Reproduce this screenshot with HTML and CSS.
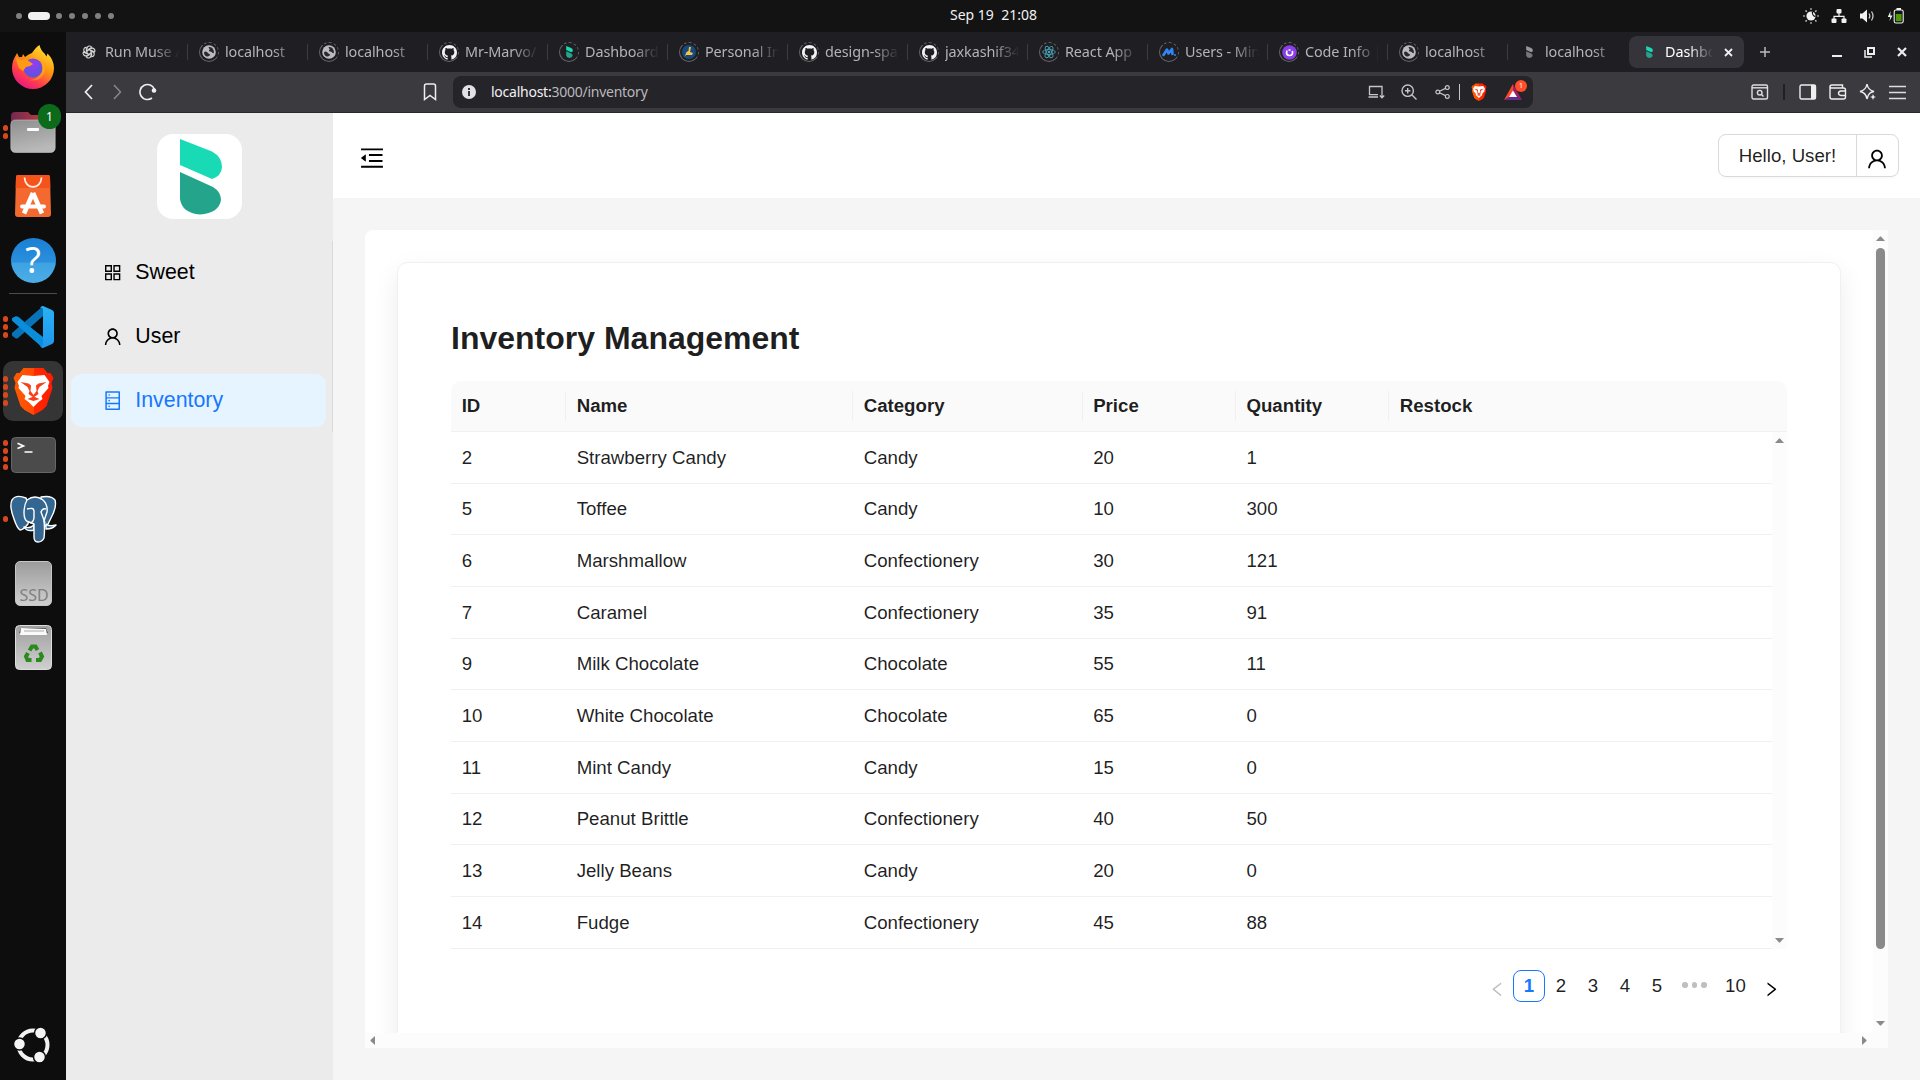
FILE: index.html
```html
<!DOCTYPE html>
<html lang="en">
<head>
<meta charset="utf-8">
<title>Dashboard</title>
<link rel="stylesheet" href="styles.css">
</head>
<body>
<svg class="defs" aria-hidden="true">
  <defs>
    <linearGradient id="ff-body" x1=".8" y1="0" x2=".2" y2="1"><stop offset="0" stop-color="#ffe83d"/><stop offset=".4" stop-color="#ff980e"/><stop offset=".72" stop-color="#ff3b4e"/><stop offset="1" stop-color="#e3118c"/></linearGradient>
    <radialGradient id="ff-globe" cx=".5" cy=".3" r=".7"><stop offset="0" stop-color="#9a3af0"/><stop offset="1" stop-color="#5457df"/></radialGradient>
    <linearGradient id="folder-back" x1="0" x2="1"><stop offset="0" stop-color="#74284f"/><stop offset="1" stop-color="#c8443c"/></linearGradient>
    <linearGradient id="grey" x1="0" y1="0" x2=".3" y2="1"><stop offset="0" stop-color="#8e8e8e"/><stop offset="1" stop-color="#b9b9b9"/></linearGradient>
    <linearGradient id="disk" x1="0" y1="0" x2="0" y2="1"><stop offset="0" stop-color="#a0a0a0"/><stop offset="1" stop-color="#cfcfcf"/></linearGradient>
    <linearGradient id="brave-g" x1="0" x2="1"><stop offset="0" stop-color="#ff5a00"/><stop offset=".5" stop-color="#ff4a05"/><stop offset=".52" stop-color="#ff2a00"/><stop offset="1" stop-color="#ff1a00"/></linearGradient>
    <linearGradient id="code-g" x1="0" y1="0" x2="0" y2="1"><stop offset="0" stop-color="#29b2f5"/><stop offset="1" stop-color="#1e97ee"/></linearGradient>
  </defs>
  <symbol id="i-user" viewBox="0 0 1024 1024"><path d="M858.5 763.6a374 374 0 00-80.6-119.5 375.63 375.63 0 00-119.5-80.6c-.4-.2-.8-.3-1.2-.5C719.5 518 760 444.7 760 362c0-137-111-248-248-248S264 225 264 362c0 82.7 40.5 156 102.8 201.1-.4.2-.8.3-1.2.5-44.8 18.9-85 46-119.5 80.6a375.63 375.63 0 00-80.6 119.5A371.7 371.7 0 00136 901.8a8 8 0 008 8.2h60c4.4 0 7.9-3.5 8-7.8 2-77.2 33-149.5 87.8-204.3 56.7-56.7 132-87.9 212.2-87.9s155.5 31.2 212.2 87.9C779 752.7 810 825 812 902.2c.1 4.4 3.6 7.8 8 7.8h60a8 8 0 008-8.2c-1-47.8-10.9-94.3-29.5-138.2zM512 534c-45.9 0-89.1-17.9-121.6-50.4S340 407.9 340 362c0-45.9 17.9-89.1 50.4-121.6S466.1 190 512 190s89.1 17.9 121.6 50.4S684 316.1 684 362c0 45.9-17.9 89.1-50.4 121.6S557.9 534 512 534z"/></symbol>
  <symbol id="i-grid" viewBox="0 0 1024 1024"><path fill-rule="evenodd" d="M144 144h336v336H144zM212 212v200h200V212zM544 144h336v336H544zM612 212v200h200V212zM144 544h336v336H144zM212 612v200h200V612zM544 544h336v336H544zM612 612v200h200V612z"/></symbol>
  <symbol id="i-db" viewBox="0 0 1024 1024"><path d="M832 64H192c-17.7 0-32 14.3-32 32v832c0 17.7 14.3 32 32 32h640c17.7 0 32-14.3 32-32V96c0-17.7-14.3-32-32-32zm-600 72h560v208H232V136zm560 480H232V408h560v208zm0 272H232V680h560v208zM304 240a40 40 0 1080 0 40 40 0 10-80 0zm0 272a40 40 0 1080 0 40 40 0 10-80 0zm0 272a40 40 0 1080 0 40 40 0 10-80 0z"/></symbol>
  <symbol id="i-fold" viewBox="0 0 1024 1024"><path d="M408 442h480c4.400 0 8-3.600 8-8v-56c0-4.400-3.600-8-8-8H408c-4.400 0-8 3.600-8 8v56c0 4.400 3.600 8 8 8zm-8 204c0 4.400 3.600 8 8 8h480c4.400 0 8-3.600 8-8v-56c0-4.400-3.600-8-8-8H408c-4.400 0-8 3.600-8 8v56zm504-486H120c-4.400 0-8 3.600-8 8v56c0 4.400 3.600 8 8 8h784c4.400 0 8-3.600 8-8v-56c0-4.400-3.600-8-8-8zm0 632H120c-4.400 0-8 3.600-8 8v56c0 4.400 3.600 8 8 8h784c4.400 0 8-3.600 8-8v-56c0-4.400-3.600-8-8-8zM115.400 518.900L271.700 642c5.800 4.600 14.400.5 14.400-6.900V388.900c0-7.400-8.500-11.500-14.400-6.900L115.400 505.100a8.740 8.740 0 000 13.800z"/></symbol>
  <symbol id="i-right" viewBox="0 0 1024 1024"><path d="M765.700 486.800L314.900 134.700A7.970 7.970 0 00302 141v77.300c0 4.900 2.300 9.600 6.100 12.600l360 281.100-360 281.100c-3.900 3-6.100 7.700-6.100 12.600V883c0 6.700 7.700 10.400 12.900 6.300l450.800-352.100a31.960 31.960 0 000-50.400z"/></symbol>
  <symbol id="i-mark" viewBox="0 0 42 76"><path d="M0 0L32 12.500Q42 18 42 28Q41.500 37 32 40L0 26Z" fill="var(--mark-a,#18dab5)"/><path d="M0 33L33 48Q41 53 41 61Q39 74 20 75.500Q2 74 0 60Z" fill="var(--mark-b,#24a58b)"/></symbol>
  <symbol id="i-globe" viewBox="0 0 14 14"><circle cx="7" cy="7" r="6.800" fill="#bcbcbe"/><path d="M2 7.200C4 5.800 5 7 6 8.200s2 .5 2.200 1.600c-.5 1.200-2 1.800-3.300 1.800C3 10.800 2 9.500 2 7.200zM6.500 2.200c1.600-.5 3.800.4 4.600 2 .8 1.300 1 2.600.6 4-1.200.4-1.500-1.200-2.700-1.500-1.400-.2-2.200-.5-2-1.600.8-.6 1-1.100.2-1.700z" fill="#2a292e"/></symbol>
  <symbol id="i-github" viewBox="0 0 16 16"><path d="M8 0C3.580 0 0 3.580 0 8c0 3.540 2.290 6.530 5.470 7.590.4.070.55-.17.55-.38 0-.19-.01-.82-.01-1.490-2.010.37-2.530-.49-2.690-.94-.09-.23-.48-.94-.82-1.130-.28-.15-.68-.52-.01-.53.63-.01 1.080.58 1.230.82.720 1.210 1.870.87 2.330.66.070-.52.280-.87.510-1.070-1.780-.2-3.640-.89-3.640-3.950 0-.87.310-1.590.82-2.150-.08-.2-.36-1.020.08-2.120 0 0 .67-.21 2.200.82.640-.18 1.320-.27 2-.27s1.360.09 2 .27c1.530-1.040 2.200-.82 2.200-.82.440 1.100.16 1.920.08 2.120.51.560.82 1.270.82 2.150 0 3.070-1.870 3.750-3.650 3.950.29.25.54.73.54 1.480 0 1.070-.01 1.930-.01 2.200 0 .21.15.46.55.38A8.010 8.010 0 0 0 16 8c0-4.420-3.580-8-8-8z" fill="#f2f2f2"/></symbol>
  <symbol id="i-lion" viewBox="0 0 40 48"><path d="M10 1h20l4 5 3 0 3 5-2 5 1 5-6 18-4 4-9 5-9-5-4-4L1 21l1-5-2-5 3-5h3z" fill="url(#brave-g)"/><path d="M20 9l11-1 5 7-1.500 4 .5 2-7 8 1 3-4 3-5 5-5-5-4-3 1-3-7-8 .5-2L4 15l5-7z" fill="#fff"/><path d="M7 15l8 1.500 2.500 2L17 24l3 4 3-4-.5-5.500 2.500-2 8-1.500-7 5-2 4 1 3-5 3.500-5-3.500 1-3-2-4zM14 32l6-2.500 6 2.500-6 2z" fill="#f7401a"/></symbol>
  <symbol id="a-up" viewBox="0 0 9 5"><path d="M0 5L4 .5h1L9 5z"/></symbol>
</svg>

<div class="desktop">
  <header class="topbar">
    <div class="workspaces"><i></i><i class="on"></i><i></i><i></i><i></i><i></i><i></i></div>
    <div class="clock">Sep 19&nbsp; 21:08</div>
    <div class="tray">
      <svg width="16" height="16" viewBox="0 0 16 16"><circle cx="8" cy="8" r="4.600" fill="#f2f2f2"/><path d="M9.500 3.500a4.200 4.200 0 0 0 3 5" fill="none" stroke="#131313" stroke-width="1.300"/><g fill="#aaa"><circle cx="8" cy="1" r=".9"/><circle cx="8" cy="15" r=".9"/><circle cx="1" cy="8" r=".9"/><circle cx="15" cy="8" r=".9"/></g><path d="M2.500 2.500l1.300 1.300M12.200 3.800l1.300-1.300M2.500 13.500l1.300-1.300M12.200 12.200l1.300 1.300" stroke="#ccc" stroke-width="1.400"/></svg>
      <svg width="16" height="16" viewBox="0 0 16 16" fill="#f2f2f2"><rect x="5.500" y="1" width="5" height="4.500" rx="1"/><rect x=".5" y="10.500" width="5" height="4.500" rx="1"/><rect x="10.500" y="10.500" width="5" height="4.500" rx="1"/><path d="M8 5v3M3 11V8.300h10V11" fill="none" stroke="#f2f2f2" stroke-width="1.200"/></svg>
      <svg width="16" height="16" viewBox="0 0 16 16" fill="#f2f2f2"><path d="M1 5.500h2.500L8 1.500v13l-4.500-4H1z"/><path d="M10 5.500q1.600 2.500 0 5M12.500 3.500q3 4.500 0 9" fill="none" stroke="#ccc" stroke-width="1.300"/></svg>
      <svg width="17" height="16" viewBox="0 0 17 16"><path d="M3.500 3L.8 9h2.400L2.500 13 5.500 7.500H3.300z" fill="#f2f2f2"/><rect x="7.200" y="2" width="9" height="13" rx="1.800" fill="none" stroke="#f2f2f2" stroke-width="1.100"/><rect x="9.500" y="0" width="4.500" height="2" fill="#f2f2f2"/><rect x="8.800" y="6" width="5.800" height="7.200" fill="#4e9a06"/></svg>
    </div>
  </header>

  <div class="workspace">
    <nav class="dock">
      <div class="app"><svg width="44" height="46" viewBox="0 0 44 46"><path d="M1 23C1 17 3 13 5 10l1-2 2 4 3 0 1-3 2 3q4-3 7-4Q25 2 28.500 0q1 5 5 8.500l2 3 1-3Q43 15 43 23A21 21 0 0 1 1 23z" fill="url(#ff-body)"/><circle cx="22" cy="23" r="9.500" fill="url(#ff-globe)"/><path d="M5 12l5 3 5-1 7 5q-3 3-7 3l-3 4Q6 24 5 12z" fill="#ff9a15"/><path d="M32 17q5 8-1 15-6 5-13 3 10-1 13-8z" fill="#ffb01f" opacity=".55"/></svg></div>
      <div class="app"><div class="run"><i></i><i></i></div><svg width="46" height="42" viewBox="0 0 46 42"><path d="M1 5q0-4 4-4h13l3 3h18q4 0 4 4v10H1z" fill="url(#folder-back)"/><rect x=".8" y="9" width="44.400" height="32.500" rx="4.500" fill="url(#grey)" stroke="#c3c3c3" stroke-width=".6"/><rect x="17" y="17" width="12" height="3" rx="1" fill="#fff"/></svg><span class="count">1</span></div>
      <div class="app"><svg width="36" height="42" viewBox="0 0 36 42"><path d="M3 0h30q2 0 2 2l1 37q0 3-3 3H3q-3 0-3-3L1 2q0-2 2-2z" fill="#f3692f"/><path d="M3 0h30q2 0 2 2l.3 11H.7L1 2q0-2 2-2z" fill="#f4541b"/><path d="M9.500 2.500C10 15 26 15 26.500 2.500" fill="none" stroke="#fff0e8" stroke-width="1.700"/><path d="M18 18L9 38.500M18 18l9 20.500" stroke="#fff" stroke-width="4.600" fill="none" stroke-linejoin="round"/><path d="M7 31.500h22" stroke="#fff" stroke-width="3.800" stroke-linecap="round"/></svg></div>
      <div class="app"><div class="help">?</div></div>
      <div class="rule"></div>
      <div class="app"><div class="run"><i></i><i></i><i></i></div><svg width="42" height="42" viewBox="0 0 42 42"><path d="M0 12.500l4-2.300q2 0 3 1L31 32v10L1 15z" fill="#0a86d1"/><path d="M31 0v10L6 32q-1.500 1-3 0L0 29.500q-1-1 0-2.500z" fill="#0873b8"/><path d="M0 13.500q0-2 4-3L31 31v11L0 14.500z" fill="#0a8edb"/><path d="M31 0l9 4q2 1 2 3v28q0 2-2 3l-9 4q-2 0-3-2 3 1 3-2V4q0-3-3-2 1-2 3-2z" fill="url(#code-g)"/></svg></div>
      <div class="app active"><div class="run"><i></i><i></i><i></i><i></i></div><svg width="41" height="48"><use href="#i-lion"/></svg></div>
      <div class="app"><div class="run"><i></i><i></i><i></i><i></i></div><svg width="45" height="36" viewBox="0 0 45 36"><rect x=".5" y=".5" width="44" height="35" rx="4" fill="#4b4b4b" stroke="#666"/><path d="M6.500 6.300l6 2.600-6 2.600" fill="none" stroke="#fff" stroke-width="1.600"/><path d="M13.500 15h8" stroke="#fff" stroke-width="1.500"/></svg></div>
      <div class="app"><div class="run"><i></i></div><svg width="47" height="48" viewBox="0 0 47 48"><g fill="#336791" stroke="#fff" stroke-width="1.400" stroke-linejoin="round"><path d="M31 2q10-2 14 3 2 7-4 18l-4 8h-7z"/><path d="M16 3Q6-1 2 5q-3 6 2 19 3 9 6 11 3 0 8-6l2-14z"/><path d="M36 29q3 3 10 1-3 4-10 4zM24 30q-4 4-10 2 3 5 10 3z"/><path d="M17 5q8-6 16 0 5 5 4 12l-3 9q1 8 0 17-2 4-6 4-4 0-4-5V29l-5-2q-5-1-5-9 0-8 3-13z"/><path d="M17 14q7-2 7 2v6q0 5-4 6M36 14q-4-1-5 3l4 11" fill="none"/></g></svg></div>
      <div class="app"><div class="ssd">SSD</div></div>
      <div class="app"><svg width="37" height="45" viewBox="0 0 37 45"><rect x=".5" y=".5" width="36" height="44" rx="4" fill="url(#disk)" stroke="#ddd"/><path d="M4 8l2-5h25l2 5z" fill="#555"/><path d="M5 10l1-7 25 1 1 6z" fill="#fafafa"/><path d="M9 6h20" stroke="#aaa"/><g fill="none" stroke="#2b8a1c" stroke-width="4"><path d="M14.500 25.500l2.500-4h3.500l2 3.500"/><path d="M25 27.500l2 4-2 3.500h-4"/><path d="M16.500 35h-4l-1.500-3.500 2-3.500"/></g></svg></div>
      <div class="launcher"><svg width="38" height="38" viewBox="0 0 38 38"><circle cx="19" cy="19" r="14.500" fill="none" stroke="#f2f2f2" stroke-width="4"/><g fill="#f4f4f4" stroke="#0d0d0d" stroke-width="1.500"><circle cx="5.500" cy="18" r="6"/><circle cx="26.500" cy="7" r="6"/><circle cx="25.500" cy="31" r="6"/></g></svg></div>
    </nav>

    <div class="browser">
      <div class="tabs">
        <div class="tab"><span class="fav"><svg width="14" height="14" viewBox="0 0 14 14"><g fill="none" stroke="#d8d8d8" stroke-width="1.100"><path id="petal" d="M5 8.300V3.400a2.600 2.600 0 0 1 4.800-1.200L6 4.600"/><use href="#petal" transform="rotate(60 7 7)"/><use href="#petal" transform="rotate(120 7 7)"/><use href="#petal" transform="rotate(180 7 7)"/><use href="#petal" transform="rotate(240 7 7)"/><use href="#petal" transform="rotate(300 7 7)"/></g></svg></span><span class="label">Run Muse A</span></div>
        <div class="tab"><span class="fav ring"><svg width="14" height="14"><use href="#i-globe"/></svg></span><span class="label">localhost</span></div>
        <div class="tab"><span class="fav ring"><svg width="14" height="14"><use href="#i-globe"/></svg></span><span class="label">localhost</span></div>
        <div class="tab"><span class="fav ring"><svg width="15" height="15"><use href="#i-github"/></svg></span><span class="label">Mr-Marvo/</span></div>
        <div class="tab"><span class="fav ring"><svg width="7" height="12"><use href="#i-mark"/></svg></span><span class="label">Dashboard</span></div>
        <div class="tab"><span class="fav ring"><svg width="14" height="14" viewBox="0 0 14 14"><circle cx="7" cy="7" r="7" fill="#174a7c"/><path d="M7 2l2 0-1 5 3 1-1 2H4l-1.500 2 2-5 2-1z" fill="#f5c344"/></svg></span><span class="label">Personal In</span></div>
        <div class="tab"><span class="fav ring"><svg width="15" height="15"><use href="#i-github"/></svg></span><span class="label">design-spa</span></div>
        <div class="tab"><span class="fav ring"><svg width="15" height="15"><use href="#i-github"/></svg></span><span class="label">jaxkashif34</span></div>
        <div class="tab"><span class="fav ring"><svg width="14" height="14" viewBox="0 0 14 14"><g fill="none" stroke="#4aa3b5" stroke-width=".9"><ellipse cx="7" cy="7" rx="6.300" ry="2.500"/><ellipse cx="7" cy="7" rx="6.300" ry="2.500" transform="rotate(60 7 7)"/><ellipse cx="7" cy="7" rx="6.300" ry="2.500" transform="rotate(120 7 7)"/></g><circle cx="7" cy="7" r="1.300" fill="#4aa3b5"/></svg></span><span class="label">React App</span></div>
        <div class="tab"><span class="fav ring"><svg width="14" height="10" viewBox="0 0 14 10"><path d="M1.500 8L5 2.500l1.500 4L10 2l.5 5" fill="none" stroke="#2f86f6" stroke-width="2.600" stroke-linejoin="round" stroke-linecap="round"/><circle cx="13" cy="8" r="1" fill="#2f86f6"/></svg></span><span class="label">Users - Min</span></div>
        <div class="tab"><span class="fav ring"><svg width="15" height="15" viewBox="0 0 15 15"><circle cx="7.500" cy="7.500" r="7.300" fill="#8a3fe8"/><path d="M5 5.500q-1.500 5 2.500 5t2.800-4.500M6.500 5h2" fill="none" stroke="#fff" stroke-width="1.700"/></svg></span><span class="label">Code Info |</span></div>
        <div class="tab"><span class="fav ring"><svg width="14" height="14"><use href="#i-globe"/></svg></span><span class="label">localhost</span></div>
        <div class="tab"><span class="fav"><svg class="dim" width="7" height="12"><use href="#i-mark"/></svg></span><span class="label">localhost</span></div>
        <div class="tab current"><span class="fav"><svg width="7" height="12"><use href="#i-mark"/></svg></span><span class="label">Dashbo</span><svg class="x" width="9" height="9" viewBox="0 0 9 9"><path d="M1 1l7 7M8 1L1 8" stroke="#eee" stroke-width="1.800"/></svg></div>
        <svg class="plus" width="12" height="12" viewBox="0 0 12 12"><path d="M6 1v10M1 6h10" stroke="#bbb" stroke-width="1.500"/></svg>
        <div class="winctl">
          <svg width="10" height="12" viewBox="0 0 10 12"><path d="M0 10h10" stroke="#eee" stroke-width="2"/></svg>
          <svg width="11" height="11" viewBox="0 0 11 11"><path d="M4 1h6v6H4z" fill="none" stroke="#eee" stroke-width="2"/><path d="M1 3v7h7" fill="none" stroke="#eee" stroke-width="1.500"/></svg>
          <svg width="10" height="10" viewBox="0 0 10 10"><path d="M1 1l8 8M9 1L1 9" stroke="#eee" stroke-width="2.200"/></svg>
        </div>
      </div>

      <div class="toolbar">
        <div class="slots">
          <svg width="9" height="16" viewBox="0 0 9 16"><path d="M8 1L1.500 8 8 15" fill="none" stroke="#f0f0f0" stroke-width="1.700"/></svg>
          <svg width="9" height="16" viewBox="0 0 9 16"><path d="M1 1l6.500 7L1 15" fill="none" stroke="#88878c" stroke-width="1.500"/></svg>
          <svg class="reload" width="18" height="18" viewBox="0 0 18 18"><path d="M13 15a7.500 7.500 0 1 1 2.500-8.500" fill="none" stroke="#f0f0f0" stroke-width="1.600"/><circle cx="15" cy="7.500" r="2.300" fill="#f0f0f0"/></svg>
        </div>
        <svg class="bookmark" width="14" height="18" viewBox="0 0 14 18"><path d="M1.500 3q0-2 2-2h7q2 0 2 2v13.500L7 12.500 1.500 16.500z" fill="none" stroke="#eee" stroke-width="1.500"/></svg>
        <div class="address">
          <svg class="info" width="14" height="14" viewBox="0 0 14 14"><circle cx="7" cy="7" r="7" fill="#e2e2e6"/><path d="M7 3v2M7 6v5" stroke="#252429" stroke-width="1.800"/></svg>
          <span class="url">localhost:<span>3000/inventory</span></span>
          <div class="actions">
            <svg width="18" height="14" viewBox="0 0 18 14"><path d="M11 12H1.500M2.500 10V1.500H15V8M2 9.700h9M15 7v5.500M12.800 10.500l2.200 2.300 2.200-2.300" fill="none" stroke="#c6c6ca" stroke-width="1.300"/></svg>
            <svg width="16" height="16" viewBox="0 0 16 16"><g fill="none" stroke="#c6c6ca" stroke-width="1.400"><circle cx="6.700" cy="6.700" r="5.700"/><path d="M11 11l4.500 4.500M6.700 4v5.400M4 6.700h5.400"/></g></svg>
            <svg class="share" width="16" height="14" viewBox="0 0 16 14"><g fill="none" stroke="#c6c6ca" stroke-width="1.200"><circle cx="2.800" cy="7" r="1.900"/><circle cx="12.300" cy="2.600" r="1.900"/><circle cx="12.300" cy="11.400" r="1.900"/><path d="M4.500 6.200l6-2.800M4.500 7.800l6 2.800"/></g></svg>
            <i class="bar"></i>
            <svg width="16" height="18"><use href="#i-lion"/></svg>
            <span class="rewards"><svg width="18" height="16" viewBox="0 0 18 16"><path d="M9 0L0 16l9-5z" fill="#ff4724"/><path d="M9 0l9 16-9-5z" fill="#9e1f63"/><path d="M0 16h18l-9-5z" fill="#662d91"/><path d="M9 6.500L5 13h8z" fill="#fff"/></svg><b>1</b></span>
          </div>
        </div>
        <div class="tools">
          <svg width="18" height="16" viewBox="0 0 18 16"><g fill="none" stroke="#dededf" stroke-width="1.400"><rect x="1" y="1" width="15.500" height="14" rx="1.500"/><path d="M1 3.800h15.500"/><circle cx="8.700" cy="8.700" r="2.300"/><path d="M10.500 10.500l2 2"/></g></svg>
          <i class="bar"></i>
          <svg width="18" height="16" viewBox="0 0 18 16"><rect x="1" y="1" width="15.500" height="14" rx="1.500" fill="none" stroke="#eee" stroke-width="1.400"/><path d="M12 1h4.500v14H12z" fill="#eee"/></svg>
          <svg width="18" height="16" viewBox="0 0 18 16"><g fill="none" stroke="#eee" stroke-width="1.400"><path d="M1 2v11q0 2 2 2h11.500q2 0 2-2V6q0-2-2-2H3Q1 4 1 2.500 1 1 3 1h10.500v3M16.500 7H12q-2.500.3-2.500 2.200T12 11.500h4.500"/></g></svg>
          <svg width="18" height="18" viewBox="0 0 18 18"><path d="M8 1q1 6 7 7.500-3 .5-4.500 2T8 16Q7 9.500 1 8.500 7 7 8 1z" fill="none" stroke="#eee" stroke-width="1.400"/><path d="M14 11l.9 2.200 2.100.8-2.100.8L14 17l-.9-2.200-2.100-.8 2.100-.8z" fill="#eee"/></svg>
          <svg width="17" height="15" viewBox="0 0 17 15"><path d="M0 1.500h17M0 7.500h17M0 13.500h17" stroke="#dedede" stroke-width="1.700"/></svg>
        </div>
      </div>

      <div class="page">
        <aside class="sidebar">
          <div class="logo"><svg width="42" height="76"><use href="#i-mark"/></svg></div>
          <ul class="menu">
            <li><svg><use href="#i-grid"/></svg>Sweet</li>
            <li><svg><use href="#i-user"/></svg>User</li>
            <li class="selected"><svg><use href="#i-db"/></svg>Inventory</li>
          </ul>
        </aside>
        <main class="main">
          <div class="header">
            <svg class="fold"><use href="#i-fold"/></svg>
            <div class="greeting"><span>Hello, User!</span><span class="who"><svg><use href="#i-user"/></svg></span></div>
          </div>
          <div class="content">
            <div class="view">
              <section class="card">
                <h2>Inventory Management</h2>
                <div class="row head"><span>ID</span><span>Name</span><span>Category</span><span>Price</span><span>Quantity</span><span>Restock</span></div>
                <div class="tbody">
                  <div class="rows">
                    <div class="row"><span>2</span><span>Strawberry Candy</span><span>Candy</span><span>20</span><span>1</span></div>
                    <div class="row"><span>5</span><span>Toffee</span><span>Candy</span><span>10</span><span>300</span></div>
                    <div class="row"><span>6</span><span>Marshmallow</span><span>Confectionery</span><span>30</span><span>121</span></div>
                    <div class="row"><span>7</span><span>Caramel</span><span>Confectionery</span><span>35</span><span>91</span></div>
                    <div class="row"><span>9</span><span>Milk Chocolate</span><span>Chocolate</span><span>55</span><span>11</span></div>
                    <div class="row"><span>10</span><span>White Chocolate</span><span>Chocolate</span><span>65</span><span>0</span></div>
                    <div class="row"><span>11</span><span>Mint Candy</span><span>Candy</span><span>15</span><span>0</span></div>
                    <div class="row"><span>12</span><span>Peanut Brittle</span><span>Confectionery</span><span>40</span><span>50</span></div>
                    <div class="row"><span>13</span><span>Jelly Beans</span><span>Candy</span><span>20</span><span>0</span></div>
                    <div class="row"><span>14</span><span>Fudge</span><span>Confectionery</span><span>45</span><span>88</span></div>
                  </div>
                  <div class="vbar"><svg class="arrow"><use href="#a-up"/></svg><svg class="arrow down"><use href="#a-up"/></svg></div>
                </div>
                <div class="pager">
                  <span class="nav prev"><svg><use href="#i-right"/></svg></span><span class="on">1</span><span>2</span><span>3</span><span>4</span><span>5</span><span class="dots"><i></i><i></i><i></i></span><span class="ten">10</span><span class="nav"><svg><use href="#i-right"/></svg></span>
                </div>
              </section>
            </div>
            <div class="vbar outer"><svg class="arrow"><use href="#a-up"/></svg><div class="thumb"></div><svg class="arrow down"><use href="#a-up"/></svg></div>
            <div class="hbar"><svg class="arrow left"><use href="#a-up"/></svg><svg class="arrow right"><use href="#a-up"/></svg></div>
          </div>
        </main>
      </div>
    </div>
  </div>
</div>
</body>
</html>
```
FILE: styles.css
```css
* { box-sizing: border-box; }
body { margin: 0; width: 1920px; height: 1080px; overflow: hidden; font-family: "Liberation Sans", Arial, sans-serif; color: rgba(0,0,0,.88); }
svg { display: block; flex: none; }
.defs { position: absolute; width: 0; height: 0; }
.desktop { height: 1080px; display: flex; flex-direction: column; }

/* system bar */
.topbar { height: 32px; flex: none; background: #131313; display: grid; grid-template-columns: 1fr auto 1fr; align-items: center; padding: 0 15px 0 16px; color: #f2f2f2; font: 14px/20px "Noto Sans", sans-serif; }
.workspaces { display: flex; align-items: center; gap: 7px; }
.workspaces i { width: 6px; height: 6px; border-radius: 50%; background: #808080; }
.workspaces .on { width: 22px; height: 8px; border-radius: 4px; background: #f2f2f2; margin: 0 -1px; }
.clock { width: 88px; margin-left: 67px; margin-top: -2px; white-space: nowrap; }
.tray { display: flex; justify-content: flex-end; gap: 12px; padding-right: 1px; }

.workspace { flex: 1; display: flex; min-height: 0; }

/* dock */
.dock { width: 66px; background: #0d0d0d; display: flex; flex-direction: column; align-items: center; padding-top: 4px; flex: none; }
.app { position: relative; width: 60px; height: 60px; margin: 2px 0; border-radius: 10px; display: flex; align-items: center; justify-content: center; flex: none; }
.app.active { background: #353535; }
.run { position: absolute; left: 0; top: 0; height: 60px; display: flex; flex-direction: column; justify-content: center; gap: 2.700px; }
.run i { width: 5.400px; height: 5.400px; border-radius: 50%; background: #d9481c; }
.count { position: absolute; left: 35px; top: 2px; width: 23px; height: 25px; border-radius: 12px; background: #0b6b1b; color: #fff; font: 12px/25px "Noto Sans", sans-serif; text-align: center; }
.help { width: 45px; height: 45px; border-radius: 50%; background: linear-gradient(#1b7fd4, #2a8fdc 54%, #3ea2e2 55%, #4dade8); color: #fff; font: 36px/44px "Noto Sans", sans-serif; text-align: center; }
.rule { width: 48px; height: 1px; margin: 1px 0; background: #4c4c4c; flex: none; }
.ssd { width: 37px; height: 45px; border-radius: 5px; background: linear-gradient(#9c9c9c, #cfcfcf); border: 1px solid #c6c6c6; color: #808080; font: 16px/20px "Noto Sans", sans-serif; padding: 23px 0 0 4px; }
.launcher { margin-top: auto; padding-bottom: 16px; }

/* browser chrome */
.browser { flex: 1; display: flex; flex-direction: column; min-width: 0; font-family: "Noto Sans", sans-serif; }
.tabs { height: 40px; flex: none; background: #1f1e23; display: flex; align-items: center; padding-left: 1px; color: #b4b4b6; font-size: 14.400px; line-height: 22px; }
.tab { width: 120px; flex: none; height: 32px; display: flex; align-items: center; padding-left: 12px; position: relative; }
.tab::after { content: ""; position: absolute; right: -1px; top: 8px; width: 1px; height: 16px; background: #3d3c41; }
.fav { width: 20px; height: 20px; display: flex; align-items: center; justify-content: center; flex: none; position: relative; }
.fav.ring::before { content: ""; position: absolute; inset: 0; border: 1.300px solid #67666b; border-right-style: dashed; border-top-style: dashed; border-radius: 50%; }
.dim { --mark-a: #98989a; --mark-b: #77777a; }
.label { width: 78px; margin-left: 6px; white-space: nowrap; letter-spacing: -.1px; -webkit-mask-image: linear-gradient(90deg, #000 62%, transparent 95%); mask-image: linear-gradient(90deg, #000 62%, transparent 95%); }
.tab:nth-child(13)::after, .tab.current::after { display: none; }
.tab.current { width: 115px; margin-left: 2px; padding-left: 10px; background: #35343a; border-radius: 8px; color: #fff; }
.current .label { width: 52px; -webkit-mask-image: linear-gradient(90deg, #000 45%, transparent 93%); mask-image: linear-gradient(90deg, #000 45%, transparent 93%); }
.x { margin-left: 7px; }
.plus { margin-left: 15px; }
.winctl { margin-left: auto; display: flex; align-items: center; gap: 22px; padding-right: 13px; }
.toolbar { height: 41px; flex: none; background: #3b3a3f; border-bottom: 1px solid #29282d; display: flex; align-items: center; }
.slots { display: flex; align-items: center; padding-left: 18px; gap: 20px; }
.reload { margin-left: -3px; }
.bookmark { margin-left: auto; margin-right: 16px; }
.address { width: 1080px; height: 32px; border-radius: 8px; background: #252429; display: flex; align-items: center; padding: 0 11px 0 9px; flex: none; }
.url { margin-left: 15px; color: #f1f1f3; font-size: 14px; letter-spacing: -.25px; line-height: 20px; }
.url span { color: #b9b9bd; }
.actions { margin-left: auto; display: flex; align-items: center; gap: 16px; }
.share { margin-left: 2px; }
.actions .bar { width: 1px; height: 16px; background: #c6c6ca; margin: 0 -5px 0 -8px; }
.rewards { position: relative; margin-left: 1px; }
.rewards b { position: absolute; left: 11px; top: -4px; width: 12px; height: 12px; border-radius: 50%; background: #ff4f2b; color: #fff; font: 7px/12px "Noto Sans", sans-serif; text-align: center; }
.tools { width: 387px; display: flex; align-items: center; justify-content: flex-end; gap: 12px; padding-right: 14px; }
.tools .bar { width: 2px; height: 16px; background: #201f24; margin: 0 2px; }

/* application */
.page { flex: 1; display: flex; min-height: 0; background: #f5f5f5; font-family: "Liberation Sans", Arial, sans-serif; }
.sidebar { width: 267px; background: #ebebeb; padding-top: 21px; flex: none; }
.logo { width: 85px; height: 85px; border-radius: 16px; background: #fff; margin: 0 auto 22px; padding-left: 2px; display: flex; align-items: center; justify-content: center; }
.menu { list-style: none; margin: 0; padding: 5px 6px 5px 5px; border-right: 1px solid #dadada; display: flex; flex-direction: column; gap: 11px; font-size: 21.333px; color: #000; }
.menu li { height: 53px; border-radius: 10.667px; display: flex; align-items: center; gap: 12.500px; padding-left: 30.500px; }
.menu svg { width: 21.333px; height: 21.333px; }
.menu .selected { background: #e6f4ff; color: #1677ff; fill: #1677ff; }
.main { flex: 1; display: flex; flex-direction: column; min-width: 0; }
.header { height: 85px; background: #fff; flex: none; display: flex; align-items: center; justify-content: space-between; padding: 0 21px 0 25px; }
.fold { width: 28px; height: 28px; margin: 5px 0 0 -.500px; }
.greeting { height: 43px; border: 1px solid #d9d9d9; border-radius: 8px; display: flex; font-size: 18.667px; box-shadow: 0 2px 1px rgba(0,0,0,.02); }
.greeting span { width: 137px; display: flex; align-items: center; justify-content: center; }
.greeting .who { width: 42px; border-left: 1px solid #d9d9d9; padding: 7px 1px 0 0; }
.who svg { width: 24px; height: 24px; }

.content { margin: 32px; height: 818px; display: grid; grid-template: minmax(0, 1fr) 15px / minmax(0, 1fr) 15px; background: #fff; border-radius: 8px 0 0 0; }
.view { overflow: hidden; padding: 32px; }
.card { height: 900px; border: 1px solid #f0f0f0; border-radius: 10.667px; padding: 54px 53px 53px; background: #fff; box-shadow: 0 10px 26px rgba(0,0,0,.08); font-size: 18.667px; }
h2 { margin: 0 0 21px; font-size: 32px; line-height: 43px; }
.row { display: grid; grid-template-columns: 115px 287px 229.500px 153.300px 153.300px 1fr; align-items: center; height: 51.667px; border-bottom: 1px solid #f0f0f0; }
.row span { padding-left: 10.667px; }
.rows .row { padding-top: 1px; }
.head { height: 51px; background: #fafafa; border-radius: 10.667px 10.667px 0 0; font-weight: 700; }
.head span { height: 30px; line-height: 29px; border-right: 1px solid #f0f0f0; }
.head span:last-child { border: 0; }
.tbody { display: flex; }
.rows { flex: 1; }
.vbar { width: 15px; background: #fcfcfc; display: flex; flex-direction: column; align-items: center; padding: 6px 0; }
.arrow { width: 9px; height: 5px; fill: #8a8a8a; }
.down { margin-top: auto; transform: rotate(180deg); }
.outer { padding: 6px 0 7px; }
.thumb { width: 9px; height: 701px; margin-top: 7px; border-radius: 5px; background: #8a8a8a; }
.hbar { grid-column: 1 / 3; background: #fcfcfc; display: flex; align-items: center; justify-content: space-between; padding: 0 19px 0 3px; }
.left { transform: rotate(-90deg); }
.right { transform: rotate(90deg); }
.pager { display: flex; justify-content: flex-end; margin-top: 21px; }
.pager > span { width: 32px; height: 32px; line-height: 31px; text-align: center; }
.pager .on { border: 1px solid #1677ff; border-radius: 8px; color: #1677ff; font-weight: 700; line-height: 30px; }
.pager .ten { width: 39px; }
.pager .dots { width: 43px; display: flex; align-items: center; justify-content: center; gap: 4px; padding-bottom: 1px; }
.dots i { width: 5.400px; height: 5.400px; border-radius: 50%; background: #bfbfbf; }
.pager .nav { display: flex; align-items: center; justify-content: center; padding-top: 8px; }
.nav svg { width: 18.667px; height: 18.667px; }
.prev svg { transform: scaleX(-1); fill: #bfbfbf; }
```
